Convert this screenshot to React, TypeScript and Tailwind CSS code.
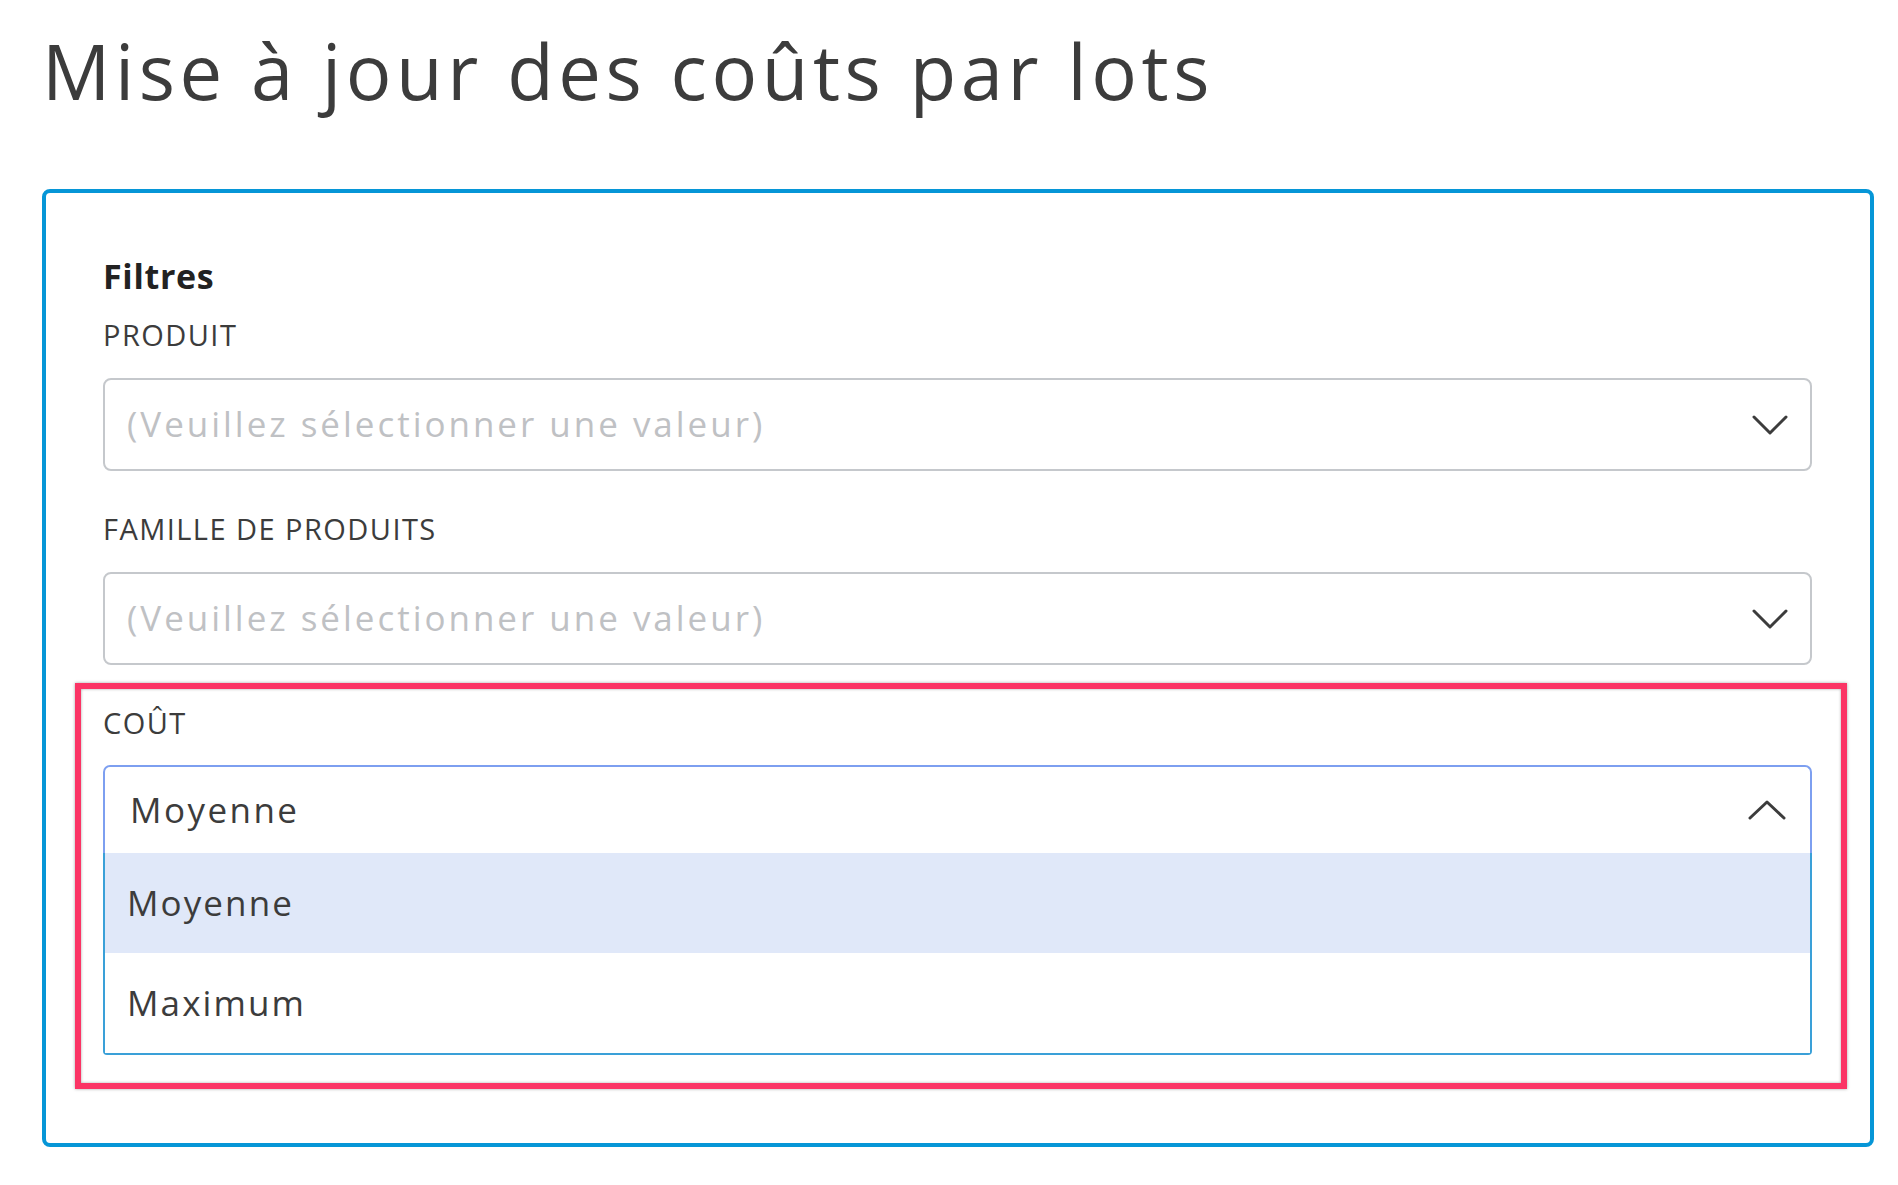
import {useState} from "react";

const OPTIONS = ["Moyenne", "Maximum"];

function ChevronDown() {
    return (
        <svg width="36" height="22" viewBox="0 0 36 22" fill="none" className="shrink-0">
            <path d="M2 3 L18 19 L34 3" stroke="#3c3c3c" strokeWidth="3" strokeLinecap="round" strokeLinejoin="round" />
        </svg>
    );
}

function ChevronUp() {
    return (
        <svg width="38" height="22" viewBox="0 0 38 22" fill="none" className="shrink-0">
            <path d="M2 19 L19 3 L36 19" stroke="#3c3c3c" strokeWidth="3" strokeLinecap="round" strokeLinejoin="round" />
        </svg>
    );
}

function Label({text}: {text: string}) {
    return <p className="leading-[34px] text-[29px] font-medium tracking-[0.05em] text-[#3c3c3c]">{text}</p>;
}

function ClosedSelect({label}: {label: string}) {
    return (
        <div className="flex flex-col gap-[26px]">
            <Label text={label} />
            <div className="h-[93px] flex items-center justify-between pl-[22px] pr-[22px] border-2 border-[#c5c8cc] rounded-[8px] bg-white">
                <span className="text-[35px] tracking-[0.085em] text-[#bfc1c4]">(Veuillez sélectionner une valeur)</span>
                <ChevronDown />
            </div>
        </div>
    );
}

export default function App() {
    const [value, setValue] = useState("Moyenne");

    return (
        <div className="min-h-screen bg-white pl-[42px] pr-[24px] font-['Open_Sans',sans-serif] text-[#3c3c3c]">
            <h1 className="pt-[33px] leading-[76px] text-[76px] tracking-[0.06em] text-[#3c3c3c]">Mise à jour des coûts par lots</h1>

            <div className="mt-[80px] w-[1832px] border-4 border-[#0696d7] rounded-[8px] pt-[63px] pb-[88px] pl-[57px] pr-[58px] flex flex-col">
                <p className="leading-[40px] text-[34px] font-bold tracking-[0.02em] text-[#222]">Filtres</p>

                <div className="mt-[22px] flex flex-col gap-[41px]">
                    <ClosedSelect label="PRODUIT" />
                    <ClosedSelect label="FAMILLE DE PRODUITS" />

                    {/* champ coût, encadré en rouge */}
                    <div className="relative flex flex-col gap-[25px]">
                        <div className="absolute -top-[23px] -bottom-[34px] -left-[28px] -right-[35px] border-[6px] border-[#fb3465] shadow-[0_0_3px_rgba(0,0,0,0.35),inset_0_0_3px_rgba(0,0,0,0.35)] pointer-events-none" />
                        <Label text="COÛT" />
                        <div className="flex flex-col">
                            <div className="h-[88px] flex items-center justify-between pl-[25px] pr-[24px] border-2 border-b-0 border-[#7d9ff0] rounded-t-[7px]">
                                <span className="text-[35px] tracking-[0.07em] text-[#3c3c3c]">{value}</span>
                                <ChevronUp />
                            </div>
                            <div className="flex flex-col border-2 border-t-0 border-[#3aa0d8] rounded-b-[4px]">
                                {OPTIONS.map((opt) => (
                                    <div
                                        key={opt}
                                        onClick={() => setValue(opt)}
                                        className={`h-[100px] flex items-center pl-[22px] text-[35px] tracking-[0.06em] text-[#3c3c3c] cursor-pointer ${
                                            opt === value ? "bg-[#e0e8f9]" : "bg-white"
                                        }`}
                                    >
                                        {opt}
                                    </div>
                                ))}
                            </div>
                        </div>
                    </div>
                </div>
            </div>
        </div>
    );
}
